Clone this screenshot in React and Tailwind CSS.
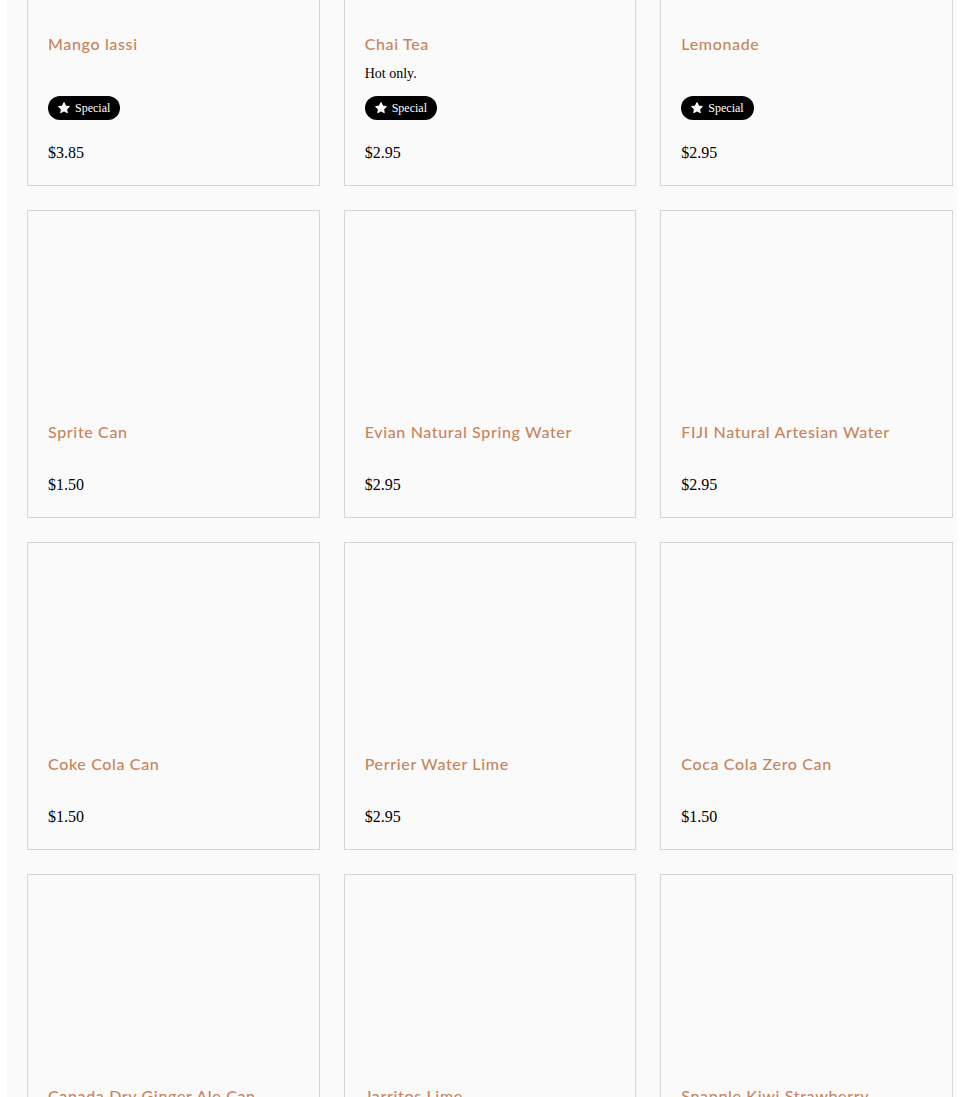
import React from 'react';

const items = [
  { name: 'Mango lassi', price: '$3.85', special: true },
  { name: 'Chai Tea', desc: 'Hot only.', price: '$2.95', special: true },
  { name: 'Lemonade', price: '$2.95', special: true },
  { name: 'Sprite Can', price: '$1.50' },
  { name: 'Evian Natural Spring Water', price: '$2.95' },
  { name: 'FIJI Natural Artesian Water', price: '$2.95' },
  { name: 'Coke Cola Can', price: '$1.50' },
  { name: 'Perrier Water Lime', price: '$2.95' },
  { name: 'Coca Cola Zero Can', price: '$1.50' },
  { name: 'Canada Dry Ginger Ale Can', price: '$1.50' },
  { name: 'Jarritos Lime', price: '$2.95' },
  { name: 'Snapple Kiwi Strawberry', price: '$2.95' },
];

const Star = () => (
  <svg viewBox="0 0 24 24" className="w-[14px] h-[14px] fill-white stroke-white" strokeWidth="2">
    <path d="M12 3l2.7 5.6 6.1.8-4.5 4.3 1.1 6.1L12 16.9l-5.4 2.9 1.1-6.1-4.5-4.3 6.1-.8z" strokeLinejoin="round" />
  </svg>
);

const ItemCard = ({ item }) => (
  <div className="flex flex-col border border-[#d6d6d6] bg-[#fafafa]">
    <div className="h-[189px]" />
    <div className="flex flex-1 flex-col p-5">
      <h3 className="font-['Lato',sans-serif] text-[16px] leading-6 font-medium text-[#c9845a] tracking-[0.65px]">
        {item.name}
      </h3>
      {item.desc && (
        <p className="mt-2 font-['Liberation_Serif',serif] text-[14px] leading-5 text-black">{item.desc}</p>
      )}
      <div className="mt-auto">
        {item.special && (
          <span className="mt-3 inline-flex h-6 items-center gap-[4px] rounded-full bg-black pl-[9px] pr-[10px] font-['Liberation_Serif',serif] text-[12px] text-white">
            <Star />
            Special
          </span>
        )}
        <div
          className={`${item.special ? 'mt-5' : 'mt-[29px]'} font-['Liberation_Serif',serif] text-[16px] leading-6 text-black`}
        >
          {item.price}
        </div>
      </div>
    </div>
  </div>
);

export default function App() {
  return (
    <div className="min-h-screen overflow-hidden bg-white">
      <div className="ml-[7px] -mt-[198px] w-[950px] bg-[#fafafa] pl-5 pr-1 py-5">
        <div className="grid grid-cols-3 gap-x-6 gap-y-6">
          {items.map((item, idx) => (
            <ItemCard key={idx} item={item} />
          ))}
        </div>
      </div>
    </div>
  );
}
